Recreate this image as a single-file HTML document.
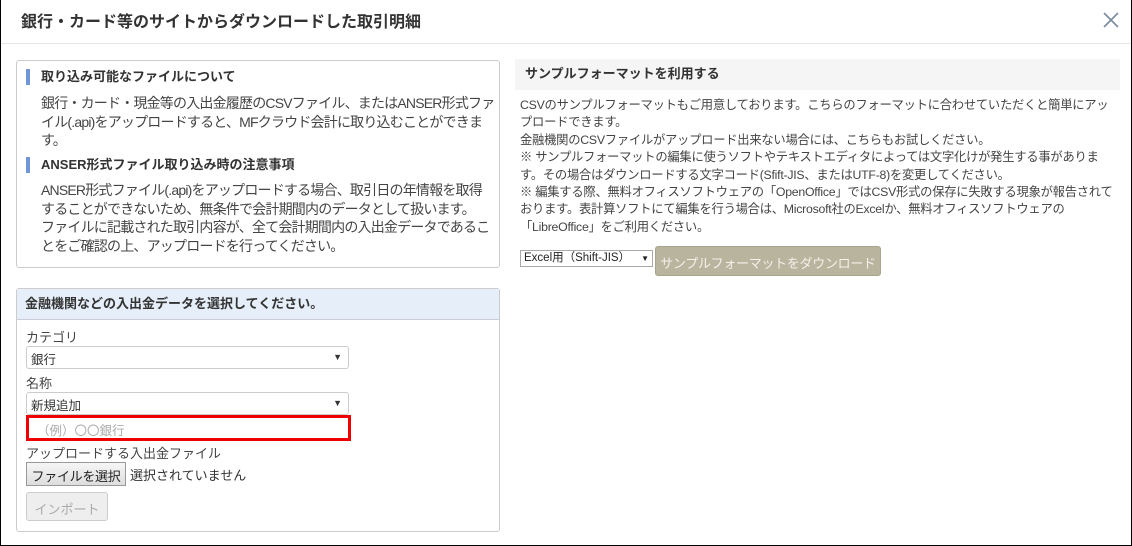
<!DOCTYPE html>
<html><head><meta charset="utf-8"><style>
*{box-sizing:border-box;margin:0;padding:0}
body{width:1132px;height:546px;background:#fff;font-family:"Liberation Sans","Noto Sans CJK JP",sans-serif;color:#333;position:relative;overflow:hidden}
.frame{position:absolute;left:0;top:0;width:1132px;height:546px;border:1px solid #000;border-top:none}
.hdr{position:absolute;left:1px;top:0;width:1130px;height:44px;border-bottom:1px solid #e5e5e5}
.hdr h1{position:absolute;left:20px;top:8px;font-size:16px;font-weight:bold;color:#333}
.x{position:absolute;left:1100px;top:10px}
.box{position:absolute;border:1px solid #ccc;border-radius:3px}
.b1{left:16px;top:60px;width:484px;height:208px}
.h{position:absolute;left:10px;font-size:13px;font-weight:bold;border-left:4px solid #7096d6;padding-left:11px;line-height:16px}
.p{position:absolute;left:25px;font-size:14px;line-height:18.7px;color:#444;white-space:nowrap;letter-spacing:-0.8px}
.b2{left:16px;top:288px;width:484px;height:244px}
.b2h{height:31px;background:#e6eef9;border-bottom:1px solid #ccd;font-size:13px;font-weight:bold;padding:7px 8px;line-height:16px}
.lab{position:absolute;left:26px;font-size:13px;color:#444;white-space:nowrap}
.sel{position:absolute;left:26px;width:323px;height:23px;border:1px solid #ccc;border-radius:3px;font-size:12.5px;padding:2px 4px;color:#333}
.sel:after{content:"▼";position:absolute;right:6px;top:5px;font-size:9px}
.r{position:absolute;left:26px;top:415px;width:325px;height:26px;border:3px solid #e00;font-size:12.5px;color:#aaa;padding:2px 8px;white-space:nowrap}
.fb{position:absolute;left:26px;top:462px;width:100px;height:24px;border:1px solid #999;background:linear-gradient(#f6f6f6,#ddd);font-size:13px;padding:3px 0;text-align:center;color:#222;white-space:nowrap;letter-spacing:-0.3px}
.imp{position:absolute;left:26px;top:492px;width:82px;height:29px;border:1px solid #ccc;border-radius:3px;background:#eee;color:#aaa;font-size:13px;padding:6px 0;text-align:center;white-space:nowrap}
.rh{position:absolute;left:515px;top:59px;width:605px;height:31px;background:#f5f5f5;font-size:13px;font-weight:bold;padding:7px 10px;line-height:16px}
.rp{position:absolute;left:520px;top:97px;font-size:12.3px;line-height:17.4px;color:#444;letter-spacing:-0.25px;white-space:nowrap}
.es{position:absolute;left:520px;top:250px;width:133px;height:17px;border:1px solid #aaa;font-size:11.5px;padding:0 3px;line-height:15px;color:#222;white-space:nowrap}
.es:after{content:"▼";position:absolute;right:3px;top:0;font-size:8px}
.db{position:absolute;left:655px;top:246px;width:226px;height:30px;background:#b9b49e;border:1px solid #a9a48e;border-radius:3px;color:#f3f1ea;font-size:13px;padding:6px 0;text-align:center;white-space:nowrap;letter-spacing:-0.3px}
</style></head><body>
<div class="frame"></div>
<div class="hdr"><h1>銀行・カード等のサイトからダウンロードした取引明細</h1>
<svg class="x" width="20" height="20" viewBox="0 0 20 20"><path d="M3 3L17 17M17 3L3 17" stroke="#7a8aa0" stroke-width="1.6"/></svg></div>
<div class="box b1"></div>
<div class="h" style="left:26px;top:69px">取り込み可能なファイルについて</div>
<div class="p" style="top:94px;left:41px">銀行・カード・現金等の入出金履歴のCSVファイル、またはANSER形式ファ<br>イル(.api)をアップロードすると、MFクラウド会計に取り込むことができま<br>す。</div>
<div class="h" style="left:26px;top:157px">ANSER形式ファイル取り込み時の注意事項</div>
<div class="p" style="top:181px;left:41px">ANSER形式ファイル(.api)をアップロードする場合、取引日の年情報を取得<br>することができないため、無条件で会計期間内のデータとして扱います。<br>ファイルに記載された取引内容が、全て会計期間内の入出金データであるこ<br>とをご確認の上、アップロードを行ってください。</div>
<div class="box b2"><div class="b2h">金融機関などの入出金データを選択してください。</div></div>
<div class="lab" style="top:327px">カテゴリ</div>
<div class="sel" style="top:346px">銀行</div>
<div class="lab" style="top:373px">名称</div>
<div class="sel" style="top:392px">新規追加</div>
<div class="r">（例）〇〇銀行</div>
<div class="lab" style="top:443px">アップロードする入出金ファイル</div>
<div class="fb">ファイルを選択</div>
<div class="lab" style="left:130px;top:465px;color:#333">選択されていません</div>
<div class="imp">インポート</div>
<div class="rh">サンプルフォーマットを利用する</div>
<div class="rp">CSVのサンプルフォーマットもご用意しております。こちらのフォーマットに合わせていただくと簡単にアッ<br>プロードできます。<br>金融機関のCSVファイルがアップロード出来ない場合には、こちらもお試しください。<br>※ サンプルフォーマットの編集に使うソフトやテキストエディタによっては文字化けが発生する事がありま<br>す。その場合はダウンロードする文字コード(Sfift-JIS、またはUTF-8)を変更してください。<br>※ 編集する際、無料オフィスソフトウェアの「OpenOffice」ではCSV形式の保存に失敗する現象が報告されて<br>おります。表計算ソフトにて編集を行う場合は、Microsoft社のExcelか、無料オフィスソフトウェアの<br>「LibreOffice」をご利用ください。</div>
<div class="es">Excel用（Shift-JIS）</div>
<div class="db">サンプルフォーマットをダウンロード</div>
</body></html>
